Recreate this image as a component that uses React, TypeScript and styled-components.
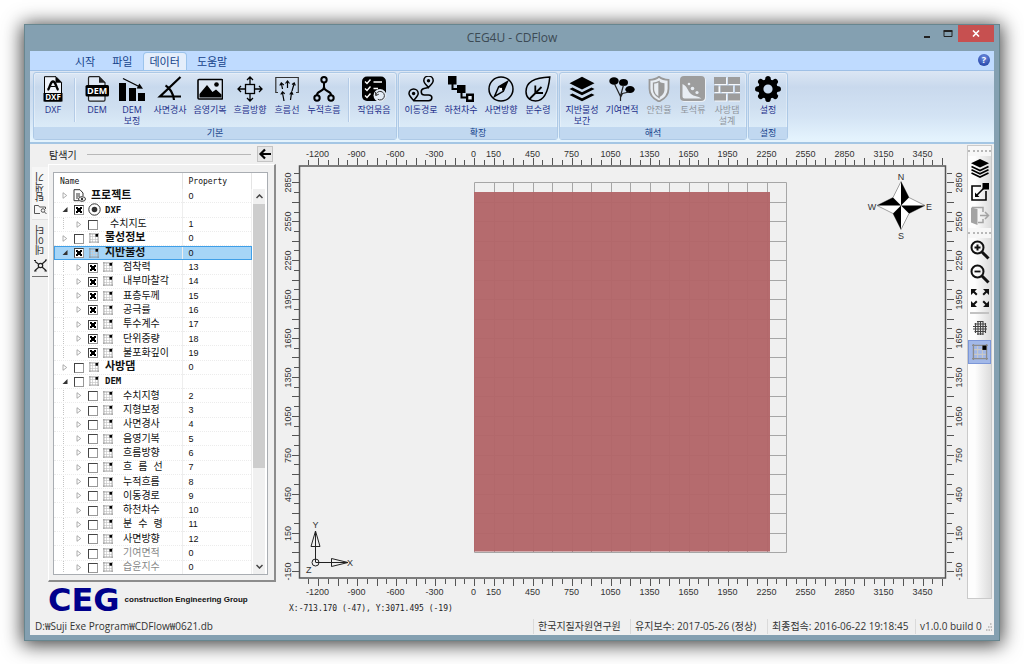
import React, { useState } from "react";
import styled, { createGlobalStyle, css } from "styled-components";

const UI = `"Open Sans", "Noto Sans CJK KR", sans-serif`;
const MONO = `"DejaVu Sans Mono", "Noto Sans CJK KR", monospace`;

const GlobalStyle = createGlobalStyle`
  * { box-sizing: border-box; }
  body { margin: 0; background: #fff; font-family: ${UI}; color: #222; }
  button { font: inherit; color: inherit; margin: 0; padding: 0; border: 0; background: none; }
`;

/* ---------- window frame ---------- */

const Page = styled.div`
  min-height: 100vh;
  padding: 24px;
  display: flex;
`;

const Frame = styled.div`
  flex: 1;
  min-width: 0;
  display: flex;
  flex-direction: column;
  background: #84a0b1;
  border: 1px solid #67868f;
  padding: 0 5px 5px;
  box-shadow: 0 2px 18px 2px rgba(0, 0, 0, 0.75);
`;

const TitleBar = styled.header`
  height: 26px;
  display: grid;
  grid-template-columns: 1fr auto 1fr;
  align-items: center;
`;

const Title = styled.h1`
  grid-column: 2;
  margin: 0;
  font-size: 12px;
  font-weight: 400;
  line-height: 26px;
  color: #3c4a54;
`;

const WindowButtons = styled.div`
  align-self: start;
  justify-self: end;
  display: flex;
`;

const WindowButton = styled.button<{ $close?: boolean }>`
  width: ${(p) => (p.$close ? 36 : 21)}px;
  height: 17px;
  display: grid;
  place-items: center;
  background: ${(p) => (p.$close ? "#c75050" : "transparent")};
`;

const Client = styled.div`
  flex: 1;
  display: flex;
  flex-direction: column;
  background: #f0f0f0;
`;

/* ---------- ribbon ---------- */

const TabStrip = styled.nav`
  height: 20px;
  display: flex;
  align-items: flex-end;
  gap: 5px;
  padding: 0 4px 0 39px;
  background: #bfdbff;
  border-bottom: 1px solid #9fc0e6;
`;

const RibbonTab = styled.button<{ $active?: boolean }>`
  height: 17px;
  padding: 0 6px;
  font-size: 11px;
  line-height: 15px;
  color: #15428b;
  border-radius: 3px 3px 0 0;
  ${(p) =>
    p.$active &&
    css`
      background: #e4eefb;
      box-shadow: 0 0 0 1px #9cc4ec;
    `}
`;

const HelpButton = styled.button`
  width: 12px;
  height: 12px;
  margin: 0 0 4px auto;
  border-radius: 6px;
  background: radial-gradient(circle at 50% 30%, #6f8fe0, #16359c);
  color: #fff;
  font-size: 9px;
  font-weight: 700;
  line-height: 12px;
`;

const Ribbon = styled.section`
  height: 73px;
  display: flex;
  gap: 1px;
  padding: 1px 3px;
  background: linear-gradient(#dbe6f4 0, #c9d9ed 16px, #d3e3f4 45px, #e4f3fd 68px);
  border-bottom: 2px solid #a4c6e4;
`;

const Group = styled.div`
  display: flex;
  flex-direction: column;
  height: 68px;
  border: 1px solid #adc9e6;
  border-radius: 3px;
  background: linear-gradient(#dce7f4 0, #c8d9ed 14px, #cfdff0 34px, #dbebf8 54px);
  box-shadow: inset 0 0 0 1px rgba(255, 255, 255, 0.3);
`;

const GroupItems = styled.div`
  flex: 1;
  display: flex;
  padding: 3px 2px 0;
`;

const GroupTitle = styled.div`
  height: 12px;
  font-size: 9px;
  line-height: 11px;
  text-align: center;
  color: #15428b;
  background: #c1d8f0;
`;

const Divider = styled.div`
  width: 2px;
  height: 44px;
  margin: 2px 4px 0;
  background: #b4cbe6;
  border-right: 1px solid #eaf3fc;
`;

const Tool = styled.button<{ $w: number }>`
  width: ${(p) => p.$w}px;
  display: flex;
  flex-direction: column;
  align-items: center;
  gap: 2px;
  font-size: 9px;
  line-height: 11px;
  color: #1d2f8a;
  white-space: nowrap;
  &:disabled { color: #8f959c; }
  svg { display: block; flex: none; }
`;

/* ---------- explorer ---------- */

const Work = styled.main`
  flex: 1;
  display: flex;
`;

const Explorer = styled.aside`
  width: 246px;
  display: flex;
  flex-direction: column;
  padding-left: 2px;
`;

const ExplorerHead = styled.div`
  height: 20px;
  display: flex;
  align-items: center;
  gap: 10px;
  padding: 0 3px 0 17px;
  font-size: 10px;
`;

const Rule = styled.div`
  flex: 1;
  height: 1px;
  margin-right: -4px;
  background: #b8b8b8;
`;

const BackButton = styled.button`
  width: 16px;
  height: 16px;
  display: grid;
  place-items: center;
  border: 1px solid #c4c4c4;
  background: #e6e6e6;
`;

const ExplorerBody = styled.div`
  flex: 1;
  display: flex;
`;

const SideTabs = styled.div`
  width: 16px;
  display: flex;
  flex-direction: column;
  padding-top: 3px;
`;

const SideTab = styled.button<{ $active?: boolean }>`
  height: ${(p) => (p.$active ? 53 : 57)}px;
  display: flex;
  flex-direction: column;
  align-items: center;
  justify-content: space-between;
  padding: 5px 0 4px;
  font-size: 10px;
  line-height: 12px;
  color: #333;
  background: ${(p) => (p.$active ? "#f6f6f6" : "#f0f0f0")};
  border-bottom: ${(p) => (p.$active ? "1px solid #e0e0e0" : "1px solid #707070")};
`;

const Vertical = styled.span`
  writing-mode: vertical-rl;
  transform: rotate(180deg);
`;

const Panel = styled.div`
  flex: 1;
  height: 418px;
  padding: 7px 6px 7px 4px;
  border: 1px solid #fff;
  border-right: 2px solid #8c8c8c;
  border-bottom: 2px solid #8c8c8c;
  display: flex;
`;

const TreeBox = styled.div`
  flex: 1;
  display: flex;
  border: 1px solid #a9adb2;
  background: #fff;
  height: 403px;
  overflow: hidden;
`;

const TreeTable = styled.table`
  flex: 1;
  height: 402px;
  border-collapse: collapse;
  table-layout: fixed;
  font-family: ${MONO};
  font-size: 8px;
  color: #111;
  th {
    height: 16px;
    padding: 0 0 0 6px;
    font-weight: 400;
    text-align: left;
    border-right: 1px solid #e4e4e4;
  }
  td {
    padding: 0 0 0 6px;
    border-right: 1px solid #eee;
    border-bottom: 1px dotted #ececec;
    line-height: 12px;
  }
`;

const Value = styled.td`
  font-family: "Liberation Sans", sans-serif;
  font-size: 9px;
`;

const Row = styled.tr<{ $selected?: boolean }>`
  ${(p) =>
    p.$selected &&
    css`
      background: #a6d5f7;
      outline: 1px solid #3f9fe8;
      outline-offset: -1px;
    `}
`;

const Cell = styled.div<{ $level: number }>`
  display: flex;
  align-items: center;
  gap: 4px;
  height: 12px;
  padding-left: ${(p) => 1 + p.$level * 14}px;
  ${(p) =>
    p.$level > 0 &&
    css`
      background: repeating-linear-gradient(#c4c4c4 0 1px, transparent 1px 2px) 3px 0 / 1px 100% no-repeat;
    `}
`;

const Expander = styled.button`
  width: 8px;
  height: 10px;
  display: grid;
  place-items: center;
`;

const Check = styled.input`
  appearance: none;
  flex: none;
  width: 10px;
  height: 10px;
  margin: 1px 0 0 1px;
  border: 1px solid #999;
  border-top-color: #444;
  border-left-color: #444;
  background: #fff center / 6px 6px no-repeat;
  &:checked {
    background-image: linear-gradient(45deg, transparent 38%, #000 38%, #000 62%, transparent 62%),
      linear-gradient(-45deg, transparent 38%, #000 38%, #000 62%, transparent 62%);
  }
`;

const IconSlot = styled.span<{ $w: number }>`
  width: ${(p) => p.$w}px;
  display: grid;
  place-items: center;
`;

const Name = styled.label<{ $bold?: boolean; $dim?: boolean; $indent: number }>`
  margin-left: ${(p) => p.$indent}px;
  font-size: ${(p) => (p.$bold ? 11 : 10)}px;
  font-weight: ${(p) => (p.$bold ? 700 : 400)};
  line-height: 12px;
  white-space: nowrap;
  color: ${(p) => (p.$dim ? "#888" : "#111")};
`;

const Latin = styled.span`
  font-size: 9px;
`;

const ScrollColumn = styled.div`
  width: 15px;
  display: flex;
  flex-direction: column;
  padding: 16px 2px 0 1px;
`;

const ScrollTrack = styled.div`
  flex: 1;
  display: flex;
  flex-direction: column;
  background: #f0f0f0;
`;

const ScrollButton = styled.button`
  height: 15px;
  display: grid;
  place-items: center;
`;

const Thumb = styled.div`
  height: 264px;
  margin-bottom: auto;
  background: #cdcdcd;
`;

const Brand = styled.div`
  height: 36px;
  display: flex;
  align-items: center;
  gap: 5px;
  padding-left: 16px;
  white-space: nowrap;
`;

const BrandMark = styled.span`
  font: 700 32px/36px "DejaVu Sans", sans-serif;
  color: #00008b;
`;

const BrandName = styled.span`
  font: 700 8px/14px "Liberation Sans", sans-serif;
  color: #111;
`;

/* ---------- map ---------- */

const MapColumn = styled.section`
  flex: 1;
  min-width: 0;
  display: flex;
  flex-direction: column;
`;

const MapSvg = styled.svg`
  display: block;
  width: 100%;
  height: auto;
  font-family: "Liberation Sans", sans-serif;
  font-size: 9px;
  fill: #333;
`;

const Coordinates = styled.output`
  padding-left: 13px;
  font-family: ${MONO};
  font-size: 8px;
  line-height: 18px;
  color: #222;
`;

/* ---------- right toolbar ---------- */

const SideBar = styled.aside`
  width: 28px;
  padding: 1px 2px 19px 1px;
  display: flex;
`;

const SideBarInner = styled.div`
  flex: 1;
  display: flex;
  flex-direction: column;
  border: 1px solid #cacaca;
  background: linear-gradient(90deg, #fdfdfd 30%, #dcdcdc);
`;

const Grip = styled.div`
  height: 10px;
  display: flex;
  align-items: center;
  background: #f7f7f7;
  &::before {
    content: "";
    flex: 1;
    border-top: 2px dotted #b8b8b8;
  }
`;

const SideButton = styled.button<{ $on?: boolean }>`
  height: 24px;
  display: grid;
  place-items: center;
  background: ${(p) => (p.$on ? "#a2b8e8" : "none")};
  box-shadow: ${(p) => (p.$on ? "inset 0 0 0 1px #7c97d8" : "none")};
`;

const SideRule = styled.div`
  height: 2px;
  margin: 2px;
  background: #c2c2c2;
`;

/* ---------- status bar ---------- */

const StatusBar = styled.footer`
  height: 17px;
  display: flex;
  align-items: center;
  padding: 0 1px 0 5px;
  font-size: 10px;
  line-height: 15px;
  white-space: nowrap;
  color: #333;
`;

const StatusPath = styled.span`
  flex: 1;
`;

const StatusItem = styled.span<{ $w: number }>`
  min-width: ${(p) => p.$w}px;
  padding-left: 4px;
  border-left: 1px solid #dadada;
`;

/* ---------- ribbon icons ---------- */

const Glyph = ({ children }: { children: React.ReactNode }) => (
  <svg width="26" height="26" viewBox="0 0 26 26" fill="none" stroke="none" aria-hidden="true">
    {children}
  </svg>
);

const bandText = {
  textAnchor: "middle" as const,
  fontFamily: "Open Sans, sans-serif",
  fontWeight: 700,
  fill: "#fff",
};

const icons: Record<string, React.ReactNode> = {
  dxf: (
    <>
      <path d="M4.500 25V.7H16l5.500 5.600V25z" fill="#eef3fa" stroke="#000" strokeWidth="1" />
      <path d="M15.500 .5v6.300H22z" fill="#000" />
      <path d="M7.500 14c2.500-1 2.500-8.500 5.500-8.500s3.300 7.500 5.500 8.500" stroke="#000" strokeWidth="2.400" />
      <path d="M10.500 10.500h5" stroke="#000" strokeWidth="1" />
      <path d="M3.500 17h19v8.500h-19z" fill="#000" />
      <text x="13" y="24" fontSize="8" {...bandText}>DXF</text>
    </>
  ),
  dem: (
    <>
      <path d="M4.500 9V2q0-1.300 1.300-1.300H15l6 6V9M4.500 20v3.800q0 1.300 1.300 1.300h14q1.200 0 1.200-1.300V20" stroke="#222" strokeWidth="1.200" fill="#dfe8f4" />
      <path d="M15 .5v6.300h6.500z" fill="#222" />
      <rect x="1.500" y="9" width="23.500" height="11.500" rx="1.500" fill="#000" />
      <text x="13.200" y="18" fontSize="9" {...bandText}>DEM</text>
    </>
  ),
  bars: (
    <>
      <path d="M0 7h7v18H0zM10 12h7v13h-7zM19 17h7v8h-7z" fill="#000" />
      <path d="M4 2.500 21 11" stroke="#000" strokeWidth="1.300" />
      <path d="m24 12.800-6.300-.4 2.700-4.800z" fill="#000" />
    </>
  ),
  slope: <path d="M23.500 1 3 20.500h21M8.500 9.500c4 2 8 8 8.500 14.500" stroke="#000" strokeWidth="2.200" />,
  image: (
    <>
      <rect x="1" y="3.500" width="24.500" height="19.500" rx="1" stroke="#000" strokeWidth="1.600" fill="#dce6f2" />
      <path d="M2.500 21.500V18l7.500-9 5.500 7 3.500-2.500 5.500 5v3z" fill="#000" />
      <circle cx="19.500" cy="8.500" r="2.300" fill="#000" />
    </>
  ),
  flowDir: (
    <>
      <rect x="8.500" y="8.500" width="9" height="9" stroke="#000" strokeWidth="1.300" />
      <path d="M13 8.500V1M13 17.500V25M8.500 13H1M17.500 13H25M10 4l3-3 3 3M10 22l3 3 3-3M4 10l-3 3 3 3M22 10l3 3-3 3" stroke="#000" strokeWidth="1.300" />
    </>
  ),
  flowLine: (
    <>
      <path d="M4 16.500H1.800V1.500h22.500v15H22" stroke="#333" strokeWidth="1.200" />
      <path d="m10 25-1.500-8M16.500 24l1-7M8.500 13 7.500 8M13.500 12V6M18 15l2-7" stroke="#000" strokeWidth="1.200" />
      <path d="m6.800 18.500 1.700-2.500 2.200 1.800M15.800 18.500l1.900-2.500 1.300 2.700M5.800 9.500 7.300 7l2.500 2M11.500 7.500 13.500 5l2 2.500M18 8.500 20.200 7l1.100 2.500" stroke="#000" strokeWidth="1.200" />
    </>
  ),
  nodes: (
    <>
      <circle cx="13" cy="3.800" r="2.700" stroke="#000" strokeWidth="2" />
      <circle cx="6" cy="22" r="2.700" stroke="#000" strokeWidth="2" />
      <circle cx="20" cy="22" r="2.700" stroke="#000" strokeWidth="2" />
      <path d="M13 6.500v6.500M6 19c0-4.500 7-3 7-8 0 5 7 3.500 7 8" stroke="#000" strokeWidth="2" />
    </>
  ),
  tasks: (
    <>
      <rect x="1" y=".5" width="24" height="24.500" rx="5" fill="#000" />
      <path d="m4 5.500 2 2 3.500-4M4 12.500l2 2 3.500-4M4 19.500l2 2 3.500-4M12.500 6H21M12.500 12.500H17" stroke="#fff" strokeWidth="1.400" />
      <circle cx="19" cy="19.500" r="6.500" fill="#e3ebf5" />
      <path d="M14.800 19.500a4.300 4.300 0 1 1 2 3.800M14.500 16l.3 3.500 3-1.300" stroke="#333" strokeWidth="1" />
    </>
  ),
  route: (
    <>
      <path d="M5.600 24.500C3 21.500 1 19.500 1 17.500a4.600 4.600 0 0 1 9.200 0c0 2-2 4-4.600 7zM20.500 11.500c-2.500-2.800-4.700-4.700-4.700-6.800a4.700 4.700 0 0 1 9.400 0c0 2.100-2.200 4-4.700 6.800z" stroke="#000" strokeWidth="1.500" />
      <circle cx="5.600" cy="17.500" r="1.700" fill="#000" />
      <circle cx="20.500" cy="4.800" r="1.700" fill="#000" />
      <path d="M6 24.700h14.500c4.500 0 4.500-5.700 0-5.700h-4c-4 0-4.500-5.500-.5-6.500l4.500-1" stroke="#000" strokeWidth="1.500" />
    </>
  ),
  stream: (
    <>
      <path d="M0 0h8.500v8.500H0zM9 9h8.500v8H9zM18 17.500h8v8.500h-8z" fill="#000" />
      <path d="M4.500 8v5H10M13.500 16v5.500H19" stroke="#000" strokeWidth="2" />
      <path d="M20.300 20h3.400v3.500h-3.400z" fill="#e6eef8" />
    </>
  ),
  compass: (
    <>
      <circle cx="13" cy="13" r="12" stroke="#000" strokeWidth="1.500" />
      <path d="M19.500 5.500 15.300 15.300 6.500 20.500l4.200-9.800z" stroke="#000" strokeWidth="1.500" />
      <path d="m19.500 5.500-4.200 9.800-4.600-4.600z" fill="#000" />
      <circle cx="13" cy="13" r="1.200" fill="#fff" />
    </>
  ),
  leaf: (
    <>
      <path d="M24.800 1C10 1.500 1 6 1 15.500 1 21.500 5 25 10.500 25 20 25 23.500 14 24.800 1z" stroke="#000" strokeWidth="1.500" />
      <path d="M4 23.500 16.500 11M10.300 17V9.500M10 17h8" stroke="#000" strokeWidth="1.800" />
    </>
  ),
  layers: (
    <>
      <path d="m13 .8 12.500 6.400L13 13.600.5 7.200z" fill="#000" />
      <path d="m.5 13 3-1.500L13 16.200l9.500-4.700 3 1.500L13 19.300zM.5 19l3-1.500L13 22.200l9.500-4.700 3 1.500L13 25.300z" fill="#000" />
    </>
  ),
  trees: (
    <>
      <ellipse cx="5" cy="5" rx="4.700" ry="3.800" fill="#000" />
      <ellipse cx="14.500" cy="6.500" rx="4.500" ry="3.500" fill="#000" />
      <ellipse cx="21" cy="13.500" rx="4.700" ry="3.500" fill="#000" />
      <path d="m5.500 8 6 12.500V25M14.500 9l-3 11M20 16l-6.500 1.500-2 4" stroke="#222" strokeWidth="1.200" />
    </>
  ),
  shield: (
    <>
      <path d="M13 .8c2.500 2 6 3 9.500 3v9c0 6-4.500 10.500-9.500 12.700C8 23.300 3.500 18.800 3.500 12.800v-9c3.500 0 7-1 9.500-3z" fill="#e8edf3" stroke="#999" strokeWidth="1.800" />
      <path d="M13 5.500c1.800 1 3.500 1.500 5.500 1.700v6c0 4-2.500 6.500-5.500 8.300z" fill="#999" />
      <path d="M13 5.500C11.200 6.500 9.500 7 7.500 7.200v6c0 4 2.500 6.500 5.500 8.300z" stroke="#999" strokeWidth="1.300" />
    </>
  ),
  debris: (
    <>
      <rect x=".8" y=".8" width="25" height="25" rx="4" fill="#f4f6f9" />
      <rect x="0" y="0" width="25" height="25" rx="4" fill="#9d9d9d" />
      <path d="M2.500 8c5 2 5 7 8.500 10 3 2.500 7 2 10.500 4.500H4.500q-2 0-2-2z" fill="#e8edf3" />
      <circle cx="9" cy="8" r="1.300" fill="#e8edf3" />
      <circle cx="12.500" cy="12.500" r="1.800" fill="#e8edf3" />
      <circle cx="17" cy="16.500" r="1.600" fill="#e8edf3" />
    </>
  ),
  bricks: (
    <>
      <path d="M1 2h12v7H1zM15 2h12v7H15zM1 10.500h5v6.500H1zM8 10.500h11.500v6.500H8zM21.500 10.500H26v6.500h-4.500zM1 18.500h12v7H1zM15 18.500h12v7H15z" fill="#f6f8fb" />
      <path d="M0 1h12v7H0zM14 1h12v7H14zM0 9.500h4.500V16H0zM6.500 9.500h12.500V16H6.500zM21 9.500h5V16h-5zM0 17.500h12v7H0zM14 17.500h12v7H14z" fill="#9d9d9d" />
    </>
  ),
  gear: (
    <>
      <circle cx="13" cy="13" r="7.200" stroke="#000" strokeWidth="5.200" />
      {[0, 45, 90, 135, 180, 225, 270, 315].map((a) => (
        <path key={a} d="M9.800 5 10.500 1.500Q11 0 13 0t2.500 1.500L16.200 5z" fill="#000" transform={`rotate(${a} 13 13)`} />
      ))}
    </>
  ),
};

interface ToolDef {
  icon: string;
  lines: string[];
  w: number;
  off?: boolean;
  split?: boolean;
}

const groups: { title: string; tools: ToolDef[] }[] = [
  {
    title: "기본",
    tools: [
      { icon: "dxf", lines: ["DXF"], w: 34 },
      { icon: "dem", lines: ["DEM"], w: 34, split: true },
      { icon: "bars", lines: ["DEM", "보정"], w: 36 },
      { icon: "slope", lines: ["사면경사"], w: 40 },
      { icon: "image", lines: ["음영기복"], w: 40 },
      { icon: "flowDir", lines: ["흐름방향"], w: 40 },
      { icon: "flowLine", lines: ["흐름선"], w: 34 },
      { icon: "nodes", lines: ["누적흐름"], w: 40 },
      { icon: "tasks", lines: ["작업묶음"], w: 40, split: true },
    ],
  },
  {
    title: "확장",
    tools: [
      { icon: "route", lines: ["이동경로"], w: 40 },
      { icon: "stream", lines: ["하천차수"], w: 40 },
      { icon: "compass", lines: ["사면방향"], w: 40 },
      { icon: "leaf", lines: ["분수령"], w: 34 },
    ],
  },
  {
    title: "해석",
    tools: [
      { icon: "layers", lines: ["지반물성", "보간"], w: 40 },
      { icon: "trees", lines: ["기여면적"], w: 40 },
      { icon: "shield", lines: ["안전율"], w: 34, off: true },
      { icon: "debris", lines: ["토석류"], w: 34, off: true },
      { icon: "bricks", lines: ["사방댐", "설계"], w: 34, off: true },
    ],
  },
  { title: "설정", tools: [{ icon: "gear", lines: ["설정"], w: 34 }] },
];

/* ---------- tree ---------- */

type NodeIcon = "doc" | "target" | "grid" | null;

interface NodeDef {
  name: string;
  value: string;
  level: number;
  open?: boolean;
  checked?: boolean;
  icon: NodeIcon;
  selected?: boolean;
  dim?: boolean;
}

const leaf = (name: string, value: string, checked = false, dim = false): NodeDef => ({
  name, value, level: 1, icon: "grid", checked, dim,
});

const nodes: NodeDef[] = [
  { name: "프로젝트", value: "0", level: 0, icon: "doc" },
  { name: "DXF", value: "", level: 0, icon: "target", open: true, checked: true },
  { name: "수치지도", value: "1", level: 1, icon: null },
  { name: "물성정보", value: "0", level: 0, icon: "grid" },
  { name: "지반물성", value: "0", level: 0, icon: "grid", open: true, checked: true, selected: true },
  leaf("점착력", "13", true),
  leaf("내부마찰각", "14", true),
  leaf("표층두께", "15", true),
  leaf("공극률", "16", true),
  leaf("투수계수", "17", true),
  leaf("단위중량", "18", true),
  leaf("불포화깊이", "19", true),
  { name: "사방댐", value: "0", level: 0, icon: "grid" },
  { name: "DEM", value: "", level: 0, icon: "grid", open: true },
  leaf("수치지형", "2"),
  leaf("지형보정", "3"),
  leaf("사면경사", "4"),
  leaf("음영기복", "5"),
  leaf("흐름방향", "6"),
  leaf("흐 름 선", "7"),
  leaf("누적흐름", "8"),
  leaf("이동경로", "9"),
  leaf("하천차수", "10"),
  leaf("분 수 령", "11"),
  leaf("사면방향", "12"),
  leaf("기여면적", "0", false, true),
  leaf("습윤지수", "0", false, true),
];

const GridGlyph = ({ size = 10 }: { size?: number }) => (
  <svg width={size} height={size} viewBox="0 0 10 10" aria-hidden="true">
    <path d="M3.500 1v8M6.500 1v8M1 3.500h8M1 6.500h8" stroke="#c8c8c8" strokeWidth=".7" fill="none" />
    <path d="M.9 0v10M9.100 0v10M0 .9h10M0 9.100h10" stroke="#8c8c8c" strokeWidth=".8" fill="none" />
    <path d="M6.500 1H9v2.700H6.500z" fill="#000" />
  </svg>
);

const NodeGlyph = ({ icon }: { icon: NodeIcon }) => {
  if (icon === "doc")
    return (
      <svg width="13" height="13" viewBox="0 0 13 13" aria-hidden="true">
        <path d="M1 .7h6L10 4v3M1 .7v11h5M3 5h4M3 7h4M3 9h2" stroke="#333" fill="none" />
        <ellipse cx="9" cy="10" rx="3.500" ry="2.300" fill="#fff" stroke="#333" />
        <circle cx="9" cy="10" r="1.200" fill="#333" />
      </svg>
    );
  if (icon === "target")
    return (
      <svg width="13" height="13" viewBox="0 0 13 13" aria-hidden="true">
        <circle cx="6.500" cy="6.500" r="5.700" fill="#fff" stroke="#333" />
        <circle cx="6.500" cy="6.500" r="2.800" fill="#333" />
      </svg>
    );
  return <GridGlyph />;
};

const TreeRow = ({ node, index }: { node: NodeDef; index: number }) => {
  const [checked, setChecked] = useState(!!node.checked);
  const id = `node-${index}`;
  const bold = node.level === 0;
  const wide = node.icon === "target" || node.icon === "doc";
  return (
    <Row $selected={node.selected}>
      <td>
        <Cell $level={node.level}>
          <Expander aria-label={`${node.name} 펼치기`}>
            <svg width="6" height="7" viewBox="0 0 6 7" aria-hidden="true">
              {node.open ? (
                <path d="M5.500 1v5h-5z" fill="#333" />
              ) : (
                <path d="M1 .7v5.600l3.700-2.800z" fill="#fff" stroke="#999" strokeWidth=".8" />
              )}
            </svg>
          </Expander>
          {node.icon !== "doc" && (
            <Check id={id} type="checkbox" checked={checked} onChange={() => setChecked(!checked)} />
          )}
          {node.icon && (
            <IconSlot $w={wide ? 13 : 11}>
              <NodeGlyph icon={node.icon} />
            </IconSlot>
          )}
          <Name
            as={node.icon === "doc" ? "span" : "label"}
            htmlFor={node.icon === "doc" ? undefined : id}
            $bold={bold}
            $dim={node.dim}
            $indent={node.icon === "doc" ? 1 : node.icon === null ? 8 : bold ? (wide ? 0 : 2) : 6}
          >
            {/^[A-Z]+$/.test(node.name) ? <Latin>{node.name}</Latin> : node.name}
          </Name>
        </Cell>
      </td>
      <Value>{node.value}</Value>
    </Row>
  );
};

/* ---------- map drawing ---------- */

const X0 = 474;
const Y0 = 552;
const PX = 0.13;
const PY = 0.1297;
const sx = (v: number) => Math.round(X0 + v * PX) + 0.5;
const sy = (v: number) => Math.round(Y0 - v * PY) + 0.5;

const range = (from: number, to: number, step: number) => {
  const out: number[] = [];
  for (let v = from; v <= to; v += step) out.push(v);
  return out;
};

const xTicks = range(-1275, 3600, 75);
const yTicks = range(-150, 2925, 75);
const xLabels = [-1200, -900, -600, -300, 0, ...range(150, 3450, 300)];
const yLabels = range(-150, 2850, 300);

const MapView = () => (
  <MapSvg viewBox="276 144 690 456" role="img" aria-label="지도">
    <g stroke="#555" strokeWidth="1">
      {xTicks.map((v) => {
        const n = v % 150 === 0 ? 7 : 5;
        return <path key={v} d={`M${sx(v)} ${165 - n}V165M${sx(v)} 579v${n}`} />;
      })}
      {yTicks.map((v) => {
        const n = v % 150 === 0 ? 7 : 5;
        return <path key={v} d={`M${299 - n} ${sy(v)}H299M947 ${sy(v)}h${n}`} />;
      })}
    </g>
    <path d="M299.500 578V166H945.500V578z" fill="none" stroke="#555" strokeWidth="1.500" />
    <g textAnchor="middle">
      {xLabels.map((v) => (
        <React.Fragment key={v}>
          <text x={sx(v) - 1} y="157">{v}</text>
          <text x={sx(v) - 1} y="595">{v}</text>
        </React.Fragment>
      ))}
      {yLabels.map((v) => (
        <React.Fragment key={v}>
          <text transform={`translate(291 ${sy(v)}) rotate(-90)`}>{v}</text>
          <text transform={`translate(962 ${sy(v)}) rotate(-90)`}>{v}</text>
        </React.Fragment>
      ))}
    </g>
    <g stroke="#a6a6a6" fill="none">
      {range(0, 2400, 150).map((v) => (
        <path key={v} d={`M${sx(v)} ${sy(2850)}V${sy(0)}`} />
      ))}
      {[...range(0, 2700, 150), 2850].map((v) => (
        <path key={v} d={`M${sx(0)} ${sy(v)}H${sx(2400)}`} />
      ))}
    </g>
    <rect x="474" y="192" width="296" height="359.500" fill="#b36669" opacity=".97" />
    <g transform="translate(901 205.500)">
      <path d="M0-24 8-8 24 0 8 8 0 24-8 8-24 0-8-8z" fill="#fff" stroke="#888" strokeWidth=".8" />
      <path d="M0-24 8-8 0 0zM24 0 8 8 0 0zM0 24-8 8 0 0zM-24 0-8-8 0 0z" fill="#000" />
      <g textAnchor="middle">
        <text x="0" y="-26">N</text>
        <text x="0" y="33">S</text>
        <text x="-29" y="4">W</text>
        <text x="28" y="4">E</text>
      </g>
    </g>
    <g stroke="#222" fill="none">
      <circle cx="315.500" cy="562.500" r="3.500" />
      <path d="M315.500 562V531l4.500 15.500h-9l4.500-15.500M315.500 562.500H348l-16.500-4v8l16.500-4" />
    </g>
    <text x="312.500" y="528">Y</text>
    <text x="347" y="566">X</text>
    <text x="306" y="573">Z</text>
  </MapSvg>
);

/* ---------- right toolbar icons ---------- */

const SideGlyph = ({ children }: { children: React.ReactNode }) => (
  <svg width="20" height="20" viewBox="0 0 20 20" fill="none" aria-hidden="true">
    {children}
  </svg>
);

const sideIcons = {
  layers: (
    <>
      <path d="m10 1 9 4.200-9 4.300-9-4.300z" fill="#000" />
      <path d="m1.500 8.500 8.500 4 8.500-4M1.500 11.800l8.500 4 8.500-4M1.500 15l8.500 4 8.500-4" stroke="#000" strokeWidth="1.600" />
    </>
  ),
  scale: (
    <>
      <path d="M11 4H2v14h14V9" stroke="#000" strokeWidth="1.600" />
      <path d="M12.500 1H19v6.500h-6.500z" fill="#000" />
      <path d="m14 6-7.500 7.500" stroke="#000" strokeWidth="1.600" />
      <path d="M5 15v-4.500L9.500 15z" fill="#000" />
    </>
  ),
  exit: (
    <>
      <path d="M1 1.500 7.500 3v16L1 16.500z" fill="#a3a3a3" />
      <path d="M2 1.500h11V6M8 16.500h5V13M10 9.500h8M15 6l3.500 3.500L15 13" stroke="#a3a3a3" strokeWidth="1.500" />
    </>
  ),
  zoomIn: (
    <>
      <circle cx="7.500" cy="7.500" r="6" stroke="#111" strokeWidth="2" />
      <path d="m12 12 6.500 6.500" stroke="#111" strokeWidth="3" />
      <path d="M4.500 7.500h6M7.500 4.500v6" stroke="#111" strokeWidth="2" />
    </>
  ),
  zoomOut: (
    <>
      <circle cx="7.500" cy="7.500" r="6" stroke="#111" strokeWidth="2" />
      <path d="m12 12 6.500 6.500" stroke="#111" strokeWidth="3" />
      <path d="M4.500 7.500h6" stroke="#111" strokeWidth="1.800" />
    </>
  ),
  expand: (
    <>
      <path d="M1 1h6L1 7zM19 1v6l-6-6zM1 19v-6l6 6zM19 19h-6l6-6z" fill="#111" />
      <path d="m3 3 3.800 3.800M17 3l-3.800 3.800M3 17l3.800-3.800M17 17l-3.800-3.800" stroke="#111" strokeWidth="2" />
    </>
  ),
  globe: (
    <path
      d="M7 3.500h6M4.500 6h11M3 8.500h14M3 11h14M4.500 13.500h11M7 16h6M5.500 5v10M8 3v14M10.500 3v14M13 3v14M15.500 5v10"
      stroke="#444" strokeWidth="1.100"
    />
  ),
};

const SideTool = ({ name, label, off }: { name: keyof typeof sideIcons; label: string; off?: boolean }) => (
  <SideButton aria-label={label} disabled={off}>
    <SideGlyph>{sideIcons[name]}</SideGlyph>
  </SideButton>
);

export default function App() {
  return (
    <>
      <GlobalStyle />
      <Page>
        <Frame>
          <TitleBar>
            <Title>CEG4U - CDFlow</Title>
            <WindowButtons>
              <WindowButton aria-label="최소화">
                <svg width="8" height="8"><path d="M1 7h6" stroke="#222" strokeWidth="2" /></svg>
              </WindowButton>
              <WindowButton aria-label="최대화">
                <svg width="10" height="8"><path d="M1 1.500h8v5H1z" fill="none" stroke="#222" /><path d="M.5 1h9" stroke="#222" strokeWidth="2" /></svg>
              </WindowButton>
              <WindowButton $close aria-label="닫기">
                <svg width="8" height="7"><path d="m1 .5 6 6m0-6-6 6" stroke="#fff" strokeWidth="1.600" /></svg>
              </WindowButton>
            </WindowButtons>
          </TitleBar>

          <Client>
            <TabStrip>
              <RibbonTab>시작</RibbonTab>
              <RibbonTab>파일</RibbonTab>
              <RibbonTab $active>데이터</RibbonTab>
              <RibbonTab>도움말</RibbonTab>
              <HelpButton aria-label="도움말">?</HelpButton>
            </TabStrip>

            <Ribbon>
              {groups.map((g, gi) => (
                <Group key={gi}>
                  <GroupItems>
                    {g.tools.map((t) => (
                      <React.Fragment key={t.icon}>
                        {t.split && <Divider />}
                        <Tool $w={t.w} disabled={t.off}>
                          <Glyph>{icons[t.icon]}</Glyph>
                          <span>
                            {t.lines.map((l, i) => (
                              <React.Fragment key={l}>
                                {i > 0 && <br />}
                                {l}
                              </React.Fragment>
                            ))}
                          </span>
                        </Tool>
                      </React.Fragment>
                    ))}
                  </GroupItems>
                  <GroupTitle>{g.title}</GroupTitle>
                </Group>
              ))}
            </Ribbon>

            <Work>
              <Explorer>
                <ExplorerHead>
                  <span>탐색기</span>
                  <Rule />
                  <BackButton aria-label="접기">
                    <svg width="14" height="12" viewBox="0 0 14 12"><path d="M2 6h11M7 1.500 2.500 6 7 10.500" fill="none" stroke="#000" strokeWidth="2.200" /></svg>
                  </BackButton>
                </ExplorerHead>
                <ExplorerBody>
                  <SideTabs>
                    <SideTab $active>
                      <Vertical>탐색기</Vertical>
                      <svg width="13" height="11" viewBox="0 0 13 11" fill="none" stroke="#555">
                        <path d="M6 9.500H.5v-8h4l1 1.500h6v2" />
                        <circle cx="9" cy="6.500" r="1.800" />
                        <path d="m10.500 8 2 2" />
                      </svg>
                    </SideTab>
                    <SideTab>
                      <Vertical>데이터</Vertical>
                      <svg width="13" height="13" viewBox="0 0 13 13" fill="none" stroke="#222" strokeWidth="1.200">
                        <circle cx="6.500" cy="6.500" r="2.200" />
                        <path d="M1 2.500 4.500 5M12 1.500 8 5M1 11.500 5 8M12 11.500 8 8M0 1.500h2M11 1h2M0 12h2.500M10.500 12H13" />
                      </svg>
                    </SideTab>
                  </SideTabs>
                  <Panel>
                    <TreeBox>
                      <TreeTable>
                        <colgroup>
                          <col width="128" />
                          <col />
                        </colgroup>
                        <thead>
                          <tr>
                            <th>Name</th>
                            <th>Property</th>
                          </tr>
                        </thead>
                        <tbody>
                          {nodes.map((n, i) => (
                            <TreeRow key={i} node={n} index={i} />
                          ))}
                        </tbody>
                      </TreeTable>
                      <ScrollColumn>
                        <ScrollTrack>
                          <ScrollButton aria-label="위로">
                            <svg width="7" height="5"><path d="m.5 4 3-3 3 3" fill="none" stroke="#444" strokeWidth="1.500" /></svg>
                          </ScrollButton>
                          <Thumb />
                          <ScrollButton aria-label="아래로">
                            <svg width="7" height="5"><path d="m.5 1 3 3 3-3" fill="none" stroke="#444" strokeWidth="1.500" /></svg>
                          </ScrollButton>
                        </ScrollTrack>
                      </ScrollColumn>
                    </TreeBox>
                  </Panel>
                </ExplorerBody>
                <Brand>
                  <BrandMark>CEG</BrandMark>
                  <BrandName>construction Engineering Group</BrandName>
                </Brand>
              </Explorer>

              <MapColumn>
                <MapView />
                <Coordinates>X:-713.170 (-47), Y:3071.495 (-19)</Coordinates>
              </MapColumn>

              <SideBar>
                <SideBarInner>
                  <Grip />
                  <SideTool name="layers" label="레이어" />
                  <SideTool name="scale" label="크기 조정" />
                  <SideTool name="exit" label="나가기" off />
                  <Grip />
                  <SideTool name="zoomIn" label="확대" />
                  <SideTool name="zoomOut" label="축소" />
                  <SideTool name="expand" label="전체 보기" />
                  <SideRule />
                  <SideTool name="globe" label="격자점" />
                  <SideButton $on aria-label="격자">
                    <GridGlyph size={16} />
                  </SideButton>
                </SideBarInner>
              </SideBar>
            </Work>

            <StatusBar>
              <StatusPath>D:₩Suji Exe Program₩CDFlow₩0621.db</StatusPath>
              <StatusItem $w={97}>한국지질자원연구원</StatusItem>
              <StatusItem $w={137}>유지보수: 2017-05-26 (정상)</StatusItem>
              <StatusItem $w={148}>최종접속: 2016-06-22 19:18:45</StatusItem>
              <StatusItem $w={70}>v1.0.0 build 0</StatusItem>
              <svg width="8" height="8" aria-hidden="true">
                <path d="M5 1h2M3 4h4M1 7h6" stroke="#b0b0b0" strokeWidth="1.500" strokeDasharray="1.500 1" />
              </svg>
            </StatusBar>
          </Client>
        </Frame>
      </Page>
    </>
  );
}
